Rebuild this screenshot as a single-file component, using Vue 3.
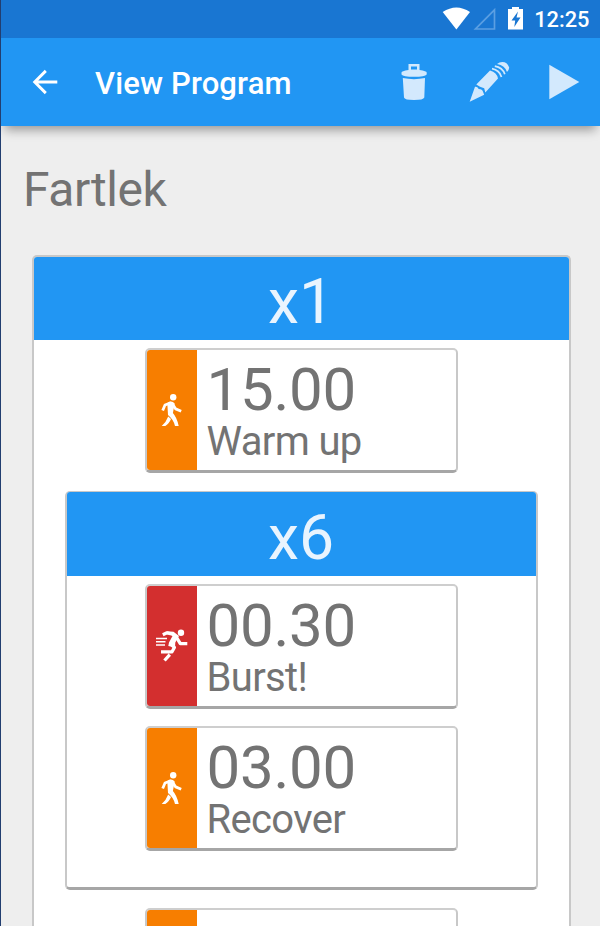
<script setup>
import { h } from 'vue'

const WalkIcon = () =>
  h('svg', { viewBox: '0 0 50 120', width: 50, height: 120 }, [
    h('circle', { cx: 26.200, cy: 47.300, r: 3.200, fill: '#fff' }),
    h('path', {
      d: 'M15.700 60.500 18 55 24 52.700M25.500 54 28.700 58.900 34.200 61.200',
      fill: 'none', stroke: '#fff', 'stroke-width': 2.800, 'stroke-linejoin': 'round',
    }),
    h('path', { d: 'M20.300 53 Q24.500 50 27.700 53.500 L25.900 63 Q29.900 67.500 31.700 75.900 H28 Q26.500 69.500 21 65 Z', fill: '#fff' }),
    h('path', { d: 'M21.200 66.500 24 69 Q21.800 74.300 18.300 75.900 H14.700 Q19.300 72 21.200 66.500Z', fill: '#fff' }),
  ])

const RunIcon = () =>
  h('svg', { viewBox: '0 0 50 120', width: 50, height: 120 }, [
    h('circle', { cx: 34, cy: 46.800, r: 3.200, fill: '#fff' }),
    h('path', {
      d: 'M15.800 48.700 20 46.800 27 48.500M29 50.500 33.300 57.700H40.300M24 58 27.400 61.500 25 65.800H14M22.800 68.700 17.500 74.500',
      fill: 'none', stroke: '#fff', 'stroke-width': 3.300, 'stroke-linejoin': 'round',
    }),
    h('path', { d: 'M19.500 45.300 26.500 45.700 32 50 28.300 56.500 28 61.500 21.300 60 22 56.500 25.500 50Z', fill: '#fff' }),
    h('path', { d: 'M9 52.500H20M9 55.700H18.500M9 59H18', stroke: '#fff', 'stroke-width': 1.600 }),
  ])

const Step = (props) =>
  h('article', { class: 'step' }, [
    h('div', { class: ['activity', props.kind] }, [h(props.kind === 'run' ? RunIcon : WalkIcon)]),
    h('div', { class: 'detail' }, [
      h('div', { class: 'duration' }, props.duration),
      h('div', { class: 'label' }, props.label),
    ]),
  ])
Step.props = ['kind', 'duration', 'label']
</script>

<template>
  <main class="screen">
    <header class="status">
      <svg width="90" height="30" viewBox="0 0 90 30">
        <path d="M2.700 12Q16.400 3 30 12L16.400 29.500Z" fill="#fff" />
        <path d="M54.500 9.800V29H35.500Z" fill="none" stroke="#5b9fe2" stroke-width="1.700" />
        <path fill-rule="evenodd" d="M68 9h4V7h7v2h4v20.500H68ZM78 11.500 71.500 20.500H75.200L74.300 27 80.500 17.500H76.500Z" fill="#fff" />
      </svg>
      <span class="clock">12:25</span>
    </header>
    <nav class="toolbar">
      <svg class="back" width="28" height="28" viewBox="0 0 28 28">
        <path d="M27.300 14H4.500M15.800 2.900 4.700 14 15.800 25.100" fill="none" stroke="#fff" stroke-width="2.900" />
      </svg>
      <h1>View Program</h1>
      <svg class="actions" width="200" height="88" viewBox="0 0 200 88" fill="#d3e9fd">
        <path fill-rule="evenodd" d="M8.500 32V26H19.500V32Q26.700 33 26.700 34.500V36.500Q25 38.800 14 38.800T1.500 36.500V34.500Q1.500 33 8.500 32ZM11 31.500H17V28.500H11Z" />
        <path d="M2.800 40Q14 42.300 25 40L24.300 59.500Q23.500 62 14 62T4 59.500Z" />
        <path d="M69.700 63.700 75 48.800Q77.500 48.500 78.700 51 82.500 51.300 82.800 53.300L84.200 56.800Z" />
        <path d="M76.300 46.500 90 32.500Q97 34.500 98 40.500L85.300 54.500 84.200 50.300 80 48.800Z" />
        <path d="M97 26 99.500 24.500Q106.500 22.500 109.200 29.500 109.200 31.500 107 34Q105 27.500 97 26Z" />
        <path d="M94.800 28.200Q102.500 29.500 104.800 36.200M92 30.700Q99.500 32.200 101.500 39" fill="none" stroke="#d3e9fd" stroke-width="1.700" />
        <path d="M149.300 26.700V61.300L179.300 44Z" />
      </svg>
    </nav>
    <section class="content">
      <h2>Fartlek</h2>
      <section class="group outer">
        <div class="repeat">x1</div>
        <div class="steps">
          <Step kind="walk" duration="15.00" label="Warm up" />
          <section class="group inner">
            <div class="repeat">x6</div>
            <div class="steps">
              <Step kind="run" duration="00.30" label="Burst!" />
              <Step kind="walk" duration="03.00" label="Recover" />
            </div>
          </section>
          <Step kind="walk" duration="" label="" />
        </div>
      </section>
    </section>
  </main>
</template>

<style>
body { overflow: hidden; }
</style>

<style scoped>
.screen {
  box-sizing: border-box;
  display: flex;
  flex-direction: column;
  width: 600px;
  height: 926px;
  overflow: hidden;
  border-left: 1px solid #223e70;
  background: #eee;
  color: #737373;
  font-family: Roboto, sans-serif;
}
.status {
  flex: none;
  display: flex;
  justify-content: flex-end;
  height: 38px;
  padding-right: 10.500px;
  background: #1976d2;
  color: #fff;
}
.status svg { margin-right: 4px; }
.clock { font-size: 21.800px; font-weight: 500; line-height: 39px; }
.toolbar {
  flex: none;
  display: flex;
  align-items: center;
  height: 88px;
  padding-left: 29px;
  background: #2196f3;
  box-shadow: 0 8px 10px -4px rgba(0, 0, 0, .36);
  color: #fff;
}
.toolbar h1 {
  flex: 1;
  margin: 4px 0 0 37px;
  font-size: 31px;
  font-weight: 500;
  letter-spacing: .15px;
  line-height: 36px;
  white-space: nowrap;
}
.content { display: flex; flex-direction: column; padding: 0 29px 0 31px; }
h2 {
  margin: 34px 0 36px -9px;
  font-size: 48px;
  font-weight: 400;
  letter-spacing: -.45px;
  line-height: 59px;
}
.group {
  box-sizing: border-box;
  border: solid #c8c8c8;
  border-width: 1px 2px 3px;
  border-bottom-color: #a6a6a6;
  border-radius: 5px;
  background: #fff;
  flex: none;
}
.outer { height: 760px; border-top-width: 2px; }
.outer > .repeat { height: 83px; padding-top: 7px; }
.inner { width: 473px; height: 399px; margin-bottom: 18px; }
.repeat {
  box-sizing: border-box;
  height: 84px;
  padding: 8px 1px 0 0;
  border-radius: 3px 3px 0 0;
  background: #2196f3;
  color: #e9f4fe;
  font-size: 62.500px;
  line-height: 75px;
  text-align: center;
}
.steps { display: flex; flex-direction: column; align-items: center; padding-top: 8px; }
.steps :deep(.step) {
  box-sizing: border-box;
  display: flex;
  flex: none;
  width: 313px;
  height: 125px;
  margin-bottom: 18px;
  border: solid #c8c8c8;
  border-width: 2px 2px 3px;
  border-top-color: #cecece;
  border-bottom-color: #a6a6a6;
  border-radius: 5px;
  background: #fff;
}
.inner .steps :deep(.step) { margin-bottom: 17px; }
.steps :deep(.activity) { width: 50px; flex: none; border-radius: 3px 0 0 3px; }
.steps :deep(.activity svg) { display: block; }
.steps :deep(.walk) { background: #f77e00; }
.steps :deep(.run) { background: #d32f2f; }
.steps :deep(.detail) { padding: 10px 0 0 9.500px; white-space: nowrap; }
.steps :deep(.duration) { font-size: 60px; line-height: 60px; letter-spacing: -.25px; }
.steps :deep(.label) { font-size: 40px; line-height: 43px; letter-spacing: -.65px; }
</style>
